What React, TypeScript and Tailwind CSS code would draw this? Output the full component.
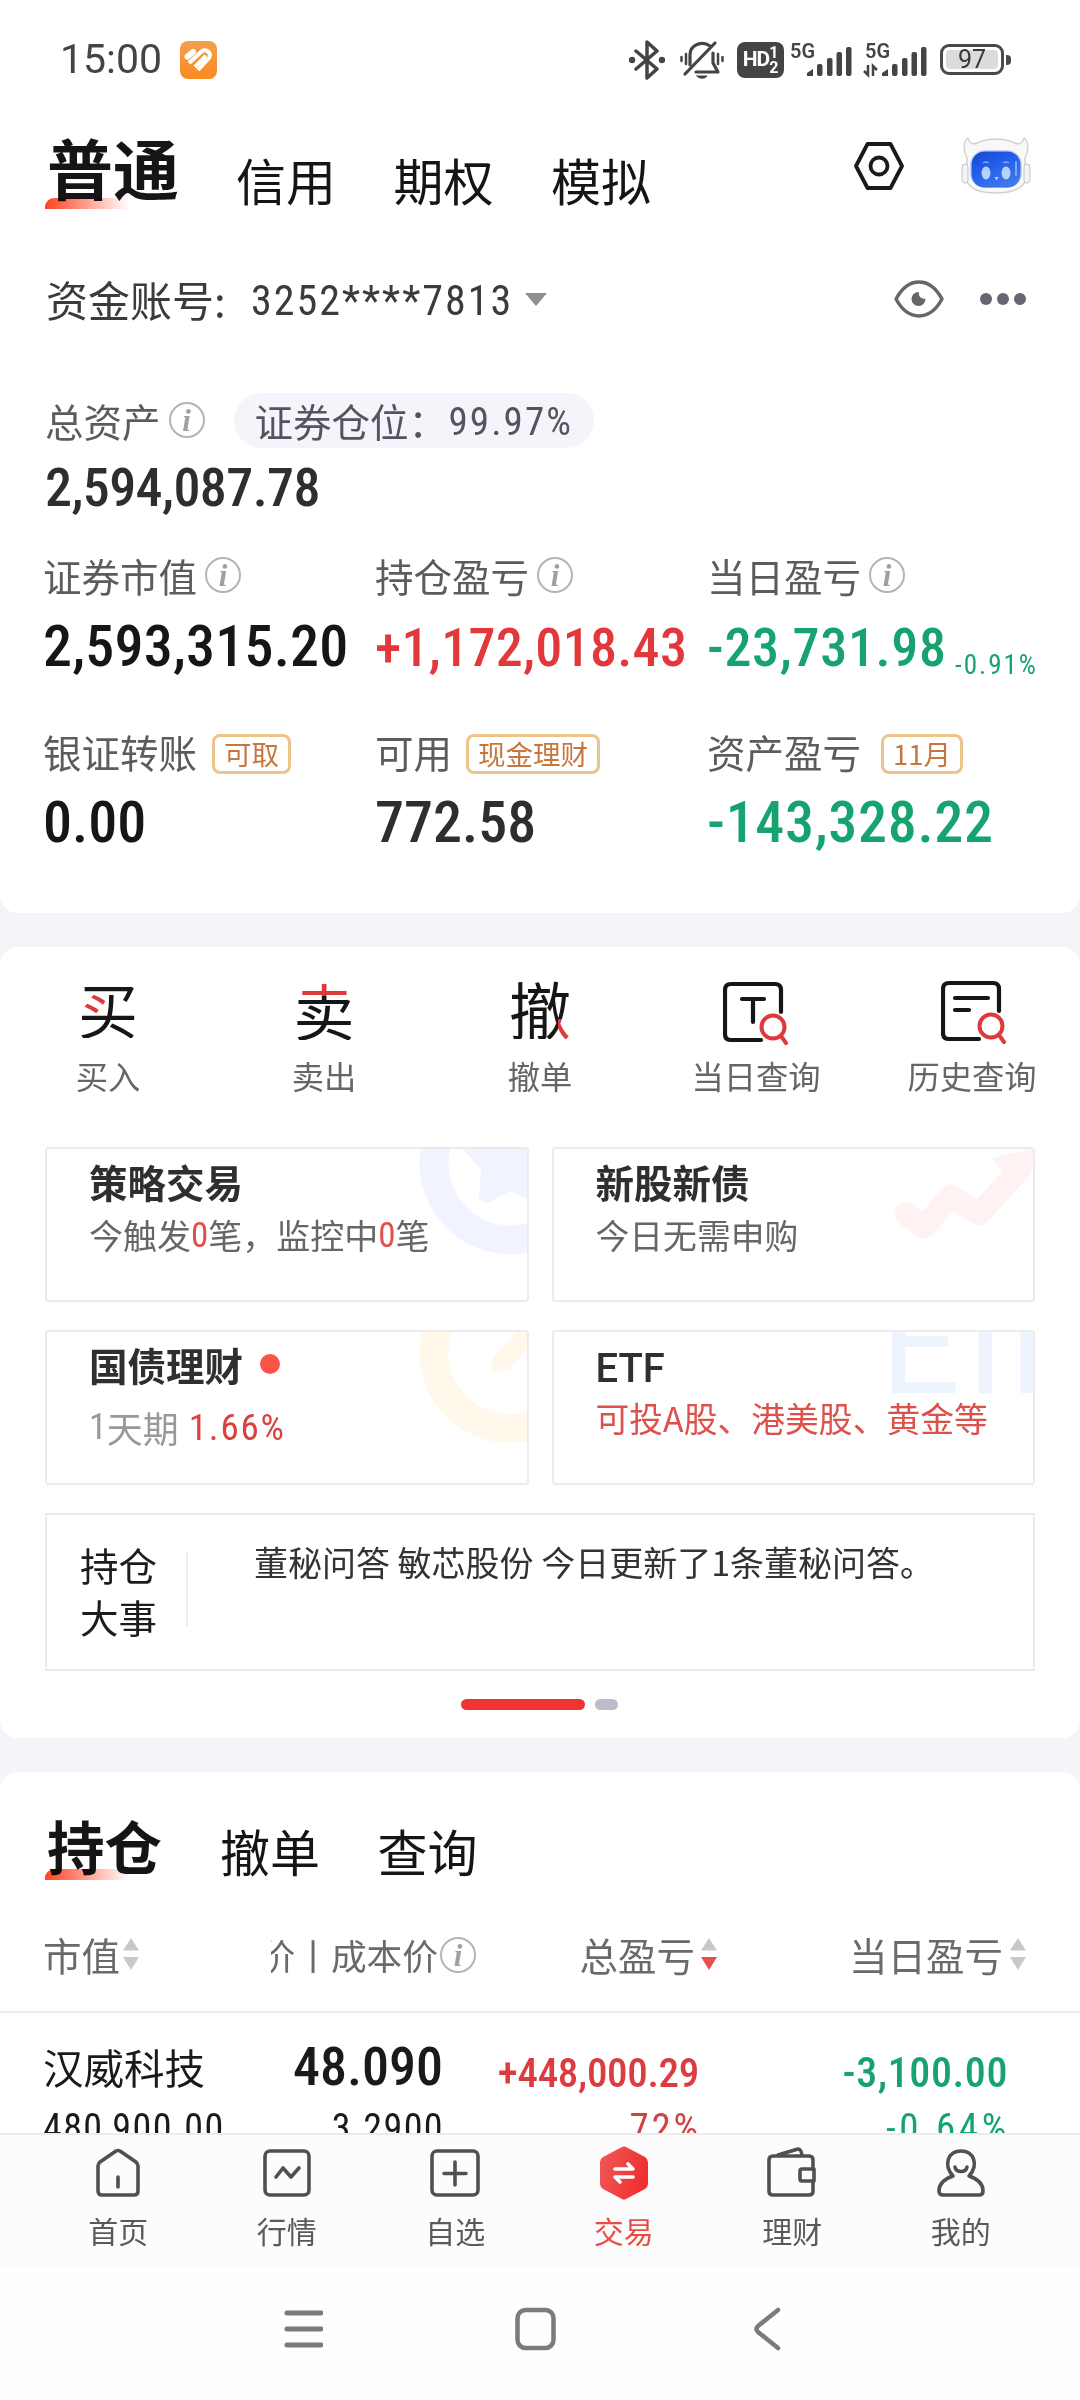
import React from 'react';

type ActionItem = { label: string; icon: React.ReactNode };

const InfoIcon = () => (
  <span className="flex h-9 w-9 shrink-0 items-center justify-center rounded-full border-2 border-[#b4b4b4] font-['Liberation_Serif',serif] text-[31px] font-bold italic leading-none text-[#a0a0a0]">
    i
  </span>
);

const Num = ({ className, children }: { className: string; children: React.ReactNode }) => (
  <span
    className={`inline-block whitespace-nowrap font-['Roboto',sans-serif] leading-none [font-stretch:85%] ${className}`}
  >
    {children}
  </span>
);

const Badge = ({ children }: { children: React.ReactNode }) => (
  <span className="mt-[5px] flex h-10 items-center rounded-lg border-3 border-[#edc48b] px-[9px] text-[27.5px] leading-none text-[#c9763c]">
    {children}
  </span>
);

const SortArrows = ({ down = '#c8c8c8' }: { down?: string }) => (
  <svg width="16" height="32" viewBox="0 0 16 32" className="shrink-0">
    <path d="M8 0 16 12.500H0Z" fill="#c8c8c8" />
    <path d="M0 19H16L8 32Z" fill={down} />
  </svg>
);

const Signal = ({ arrows = false }: { arrows?: boolean }) => (
  <svg width="64" height="36" viewBox="0 0 64 36" className="overflow-visible">
    <text x="0" y="16" fontFamily="Roboto, sans-serif" fontSize="20" fontWeight="600" fill="#444">
      5G
    </text>
    <g fill="#444">
      <path d="M17 34V31L23 27V34Z" />
      <rect x="27" y="22" width="5.500" height="12" rx="2" />
      <rect x="37" y="16" width="5.500" height="18" rx="2" />
      <rect x="46.500" y="10" width="5.500" height="24" rx="2" />
      <rect x="56" y="5" width="5.500" height="29" rx="2" />
    </g>
    {arrows && (
      <g stroke="#444" strokeWidth="2.500" fill="none">
        <path d="M3 23V33L-1 29" />
        <path d="M8 34V24L12 28" />
      </g>
    )}
  </svg>
);

const StatusBar = () => (
  <div className="flex h-[119px] shrink-0 items-center pl-[60px] pr-[69px]">
    <span className="w-[120px] font-['Roboto',sans-serif] text-[41px] leading-none text-[#444]">
      15:00
    </span>
    <svg width="37" height="38" viewBox="0 0 37 38">
      <defs>
        <linearGradient id="app" x1="0" y1="0" x2="0" y2="1">
          <stop offset="0" stopColor="#f3a04e" />
          <stop offset="1" stopColor="#f98a20" />
        </linearGradient>
      </defs>
      <rect width="37" height="38" rx="8" fill="url(#app)" />
      <g fill="none" stroke="#fff" strokeWidth="4" strokeLinejoin="round">
        <path d="M7.500 15.500 13 11" strokeWidth="6" strokeLinecap="round" />
        <path d="M9 22 21 11C25 7 32 11 29 17L18 29" />
        <path d="M15 26 26 15" />
      </g>
    </svg>
    <div className="ml-auto flex items-center">
      <svg width="36" height="40" viewBox="0 0 36 40" fill="none" stroke="#444" strokeWidth="3.500" strokeLinejoin="round" strokeLinecap="round">
        <path d="M7 11 28 29 18 38V2L28 11 7 29" />
        <circle cx="3" cy="20" r="1.500" fill="#444" />
        <circle cx="33" cy="20" r="1.500" fill="#444" />
      </svg>
      <svg className="ml-[15px]" width="44" height="40" viewBox="0 0 44 40" fill="none" stroke="#444" strokeWidth="3.200" strokeLinecap="round" strokeLinejoin="round">
        <path d="M10 25V15C10 5 22 0 30 6" />
        <path d="M33 13V23L38 32H16" />
        <path d="M5 34 35 3" />
        <path d="M6 14V24M1.500 17V21M38 14V24M42.500 17V21" strokeWidth="2.500" />
        <path d="M17 36H27C25 39 19 39 17 36Z" fill="#444" strokeWidth="1" />
      </svg>
      <span className="ml-[13px] flex h-9 w-[47px] items-center justify-center rounded-lg bg-[#444] font-['Roboto',sans-serif] font-bold leading-none text-white">
        <span className="text-[21px] tracking-[-1px]">HD</span>
        <span className="flex flex-col text-[16px] leading-[15px]">
          <span>1</span>
          <span>2</span>
        </span>
      </span>
      <span className="ml-[6px] w-[75px]">
        <Signal />
      </span>
      <span className="w-[75px]">
        <Signal arrows />
      </span>
      <span className="flex h-[31px] w-[64px] items-center justify-center rounded-[9px] border-3 border-[#4a4a4a] p-[3px]">
        <span className="flex h-full w-full items-center justify-center rounded-sm bg-[#dcdcdc] font-['Roboto',sans-serif] text-[25px] leading-none text-[#3a3a3a]">
          97
        </span>
      </span>
      <span className="ml-[2px] h-[10px] w-[5px] rounded-r-sm bg-[#4a4a4a]" />
    </div>
  </div>
);

const RobotAvatar = () => (
  <svg width="70" height="58" viewBox="0 0 70 58">
    <defs>
      <linearGradient id="face" x1="0" y1="0" x2="0.600" y2="1">
        <stop offset="0" stopColor="#1747d2" />
        <stop offset="0.500" stopColor="#2260ec" />
        <stop offset="1" stopColor="#3c78e8" />
      </linearGradient>
    </defs>
    <path
      d="M7 1C2 4 2 14 6 21L5 42C8 52 20 56 35 56S62 52 65 42L64 21C68 14 68 4 63 1C62 6 58 8 54 6C42 1 28 1 16 6C12 8 8 6 7 1Z"
      fill="#f8f8f9"
      stroke="#d3d0d3"
      strokeWidth="1.400"
    />
    <rect x="1" y="27" width="6" height="19" rx="3" fill="#f3f2f5" stroke="#c5c3c8" />
    <rect x="63" y="27" width="6" height="19" rx="3" fill="#f3f2f5" stroke="#c5c3c8" />
    <rect x="9" y="13" width="52" height="38" rx="15" fill="#c8d4f5" />
    <rect x="10.500" y="14.500" width="49" height="36" rx="13" fill="url(#face)" />
    <path d="M22 26Q25 24 28 26M42 26Q45 24 48 26" stroke="#7ea9fa" strokeWidth="1.500" fill="none" />
    <ellipse cx="25" cy="36" rx="4.500" ry="6.500" fill="#b4d2fd" />
    <ellipse cx="45" cy="36" rx="4.500" ry="6.500" fill="#b4d2fd" />
    <path d="M33.500 40H37.500L35.500 43.500Z" fill="#b4d2fd" />
    <path d="M55 25V38" stroke="#7fa8fb" strokeWidth="2" strokeLinecap="round" />
  </svg>
);

const Underline = ({ className }: { className: string }) => (
  <span
    className={`absolute -left-[2px] h-[11px] w-[84px] rounded-tl-[9px] bg-gradient-to-r from-[#ff4220] to-transparent mix-blend-multiply ${className}`}
  />
);

const Header = () => (
  <div className="flex h-[111px] shrink-0 items-start pl-[47px] pr-[49px] text-[#151515]">
    <div className="relative mt-[14px] h-[66px] w-[189px] text-[66px] font-bold leading-none">
      普通
      <Underline className="top-[65px]" />
    </div>
    <div className="mt-[35px] flex gap-[57.5px] text-[50px] leading-none">
      <span>信用</span>
      <span>期权</span>
      <span>模拟</span>
    </div>
    <svg className="ml-auto mt-[23px]" width="50" height="48" viewBox="0 0 50 48" fill="none" stroke="#1a1a1a" strokeWidth="3.800" strokeLinejoin="round">
      <path d="M13.500 2H36.500L48 24 36.500 46H13.500L2 24Z" />
      <circle cx="25" cy="24" r="8.500" />
    </svg>
    <span className="ml-[57px] mt-[18px]">
      <RobotAvatar />
    </span>
  </div>
);

const AccountRow = () => (
  <div className="flex h-[138px] shrink-0 items-center pl-[46px] pr-[54px] text-[42px] leading-none text-[#3b3b3b]">
    <span className="w-[205px]">资金账号:</span>
    <Num className="mt-1 w-[274px] text-[42px] tracking-[2px]">3252****7813</Num>
    <svg width="22" height="13" viewBox="0 0 22 13">
      <path d="M0 0H22L11 13Z" fill="#8f8f8f" />
    </svg>
    <svg className="ml-auto" width="50" height="38" viewBox="0 0 50 38" fill="none" stroke="#666" strokeWidth="3.400" strokeLinejoin="round">
      <path d="M2 19C8 8 16 2 25 2S42 8 48 19C42 30 34 36 25 36S8 30 2 19Z" />
      <path d="M25 12A7 7 0 1 0 31.500 18.500C27.500 19.500 24 16 25 12Z" fill="#666" stroke="none" />
    </svg>
    <div className="ml-[36px] flex gap-[5px]">
      <span className="h-3 w-3 rounded-full bg-[#666670]" />
      <span className="h-3 w-3 rounded-full bg-[#666670]" />
      <span className="h-3 w-3 rounded-full bg-[#666670]" />
    </div>
  </div>
);

const AssetSummary = () => (
  <div className="mt-[23px] pl-[43px]">
    <div className="flex h-[58px] items-center pl-[2px] text-[38.5px] leading-none text-[#5c5c5c]">
      <span className="mr-2">总资产</span>
      <InfoIcon />
      <span className="ml-[29px] flex h-[55px] w-[360px] items-center rounded-full bg-[#f4f5fa] pl-[21px] text-[#54545e]">
        <span className="w-[194px] whitespace-nowrap">证券仓位：</span>
        <Num className="mt-1 text-[39px] tracking-[2.1px]">99.97%</Num>
      </span>
    </div>
    <div className="flex h-[56px] items-center pl-[2px] pt-[21px] text-[#2e2e2e]">
      <Num className="text-[54px] font-medium tracking-[-0.6px]">2,594,087.78</Num>
    </div>

    <div className="mt-[50px] grid grid-cols-[332px_332px_1fr] text-[38.5px] leading-none text-[#5c5c5c]">
      <div>
        <div className="flex h-10 items-center gap-2">
          证券市值 <InfoIcon />
        </div>
        <div className="mt-[26px] flex h-[50px] items-center text-[#161616]">
          <Num className="text-[58px] font-medium tracking-[0.2px]">2,593,315.20</Num>
        </div>
      </div>
      <div>
        <div className="flex h-10 items-center gap-2">
          持仓盈亏 <InfoIcon />
        </div>
        <div className="mt-[28px] flex h-[50px] items-center text-[#e2383b]">
          <Num className="text-[54px] font-medium tracking-[0.3px]">+1,172,018.43</Num>
        </div>
      </div>
      <div>
        <div className="flex h-10 items-center gap-2">
          当日盈亏 <InfoIcon />
        </div>
        <div className="mt-[28px] flex h-[50px] items-center text-[#17a36f]">
          <Num className="w-[248px] text-[54px] font-medium tracking-[0.7px]">-23,731.98</Num>
          <Num className="mt-[34px] text-[27px] tracking-[2px]">-0.91%</Num>
        </div>
      </div>
    </div>

    <div className="mt-[58px] grid grid-cols-[332px_332px_1fr] text-[38.5px] leading-none text-[#5c5c5c]">
      <div>
        <div className="flex h-10 items-center gap-[15px]">
          银证转账 <Badge>可取</Badge>
        </div>
        <div className="mt-[26px] flex h-[50px] items-center text-[#161616]">
          <Num className="text-[58px] font-medium">0.00</Num>
        </div>
      </div>
      <div>
        <div className="flex h-10 items-center gap-[14px]">
          可用 <Badge>现金理财</Badge>
        </div>
        <div className="mt-[26px] flex h-[50px] items-center text-[#2e2e2e]">
          <Num className="text-[58px] font-medium">772.58</Num>
        </div>
      </div>
      <div>
        <div className="flex h-10 items-center gap-[20px]">
          资产盈亏 <Badge>11月</Badge>
        </div>
        <div className="mt-[26px] flex h-[50px] items-center text-[#17a36f]">
          <Num className="text-[58px] font-medium tracking-[0.7px]">-143,328.22</Num>
        </div>
      </div>
    </div>
  </div>
);

const magnifier = (
  <g stroke="#e0393c" strokeWidth="4">
    <circle cx="50" cy="46" r="11.500" />
    <path d="M58 55 63 62" />
  </g>
);

const actions: ActionItem[] = [
  {
    label: '买入',
    icon: (
      <span className="mb-[8px] bg-[#161616] bg-[linear-gradient(#e0393c,#e0393c)] bg-[length:26px_20px] bg-[position:2px_15px] bg-no-repeat bg-clip-text text-[60px] leading-none text-transparent">
        买
      </span>
    ),
  },
  {
    label: '卖出',
    icon: (
      <span className="mb-[6px] bg-[#161616] bg-[linear-gradient(#e0393c,#e0393c)] bg-[length:62px_17px] bg-[position:0_0] bg-no-repeat bg-clip-text text-[61px] leading-none text-transparent">
        卖
      </span>
    ),
  },
  {
    label: '撤单',
    icon: (
      <span className="mb-[8px] bg-[#161616] bg-[linear-gradient(#e0393c,#e0393c)] bg-[length:14px_22px] bg-[position:49px_42px] bg-no-repeat bg-clip-text text-[62px] leading-none text-transparent">
        撤
      </span>
    ),
  },
  {
    label: '当日查询',
    icon: (
      <svg className="-ml-[1px] mt-[2px]" width="66" height="64" viewBox="0 0 66 64" fill="none" stroke="#161616" strokeWidth="4.200" strokeLinecap="round">
        <path d="M58 31V9Q58 3 52 3H8Q2 3 2 9V53Q2 59 8 59H38" />
        <path d="M19 18H41M30 18V41" />
        {magnifier}
      </svg>
    ),
  },
  {
    label: '历史查询',
    icon: (
      <svg className="ml-[3px]" width="66" height="64" viewBox="0 0 66 64" fill="none" stroke="#161616" strokeWidth="4.200" strokeLinecap="round">
        <path d="M58 31V9Q58 3 52 3H8Q2 3 2 9V53Q2 59 8 59H38" />
        <path d="M14 18H47M14 30H28" />
        {magnifier}
      </svg>
    ),
  },
];

const QuickActions = () => (
  <div className="grid h-[200px] grid-cols-5 pt-[33px]">
    {actions.map((item) => (
      <div key={item.label} className="flex flex-col items-center">
        <div className="flex h-16 items-center">{item.icon}</div>
        <span className="mt-[15px] text-[32.3px] leading-none text-[#666]">{item.label}</span>
      </div>
    ))}
  </div>
);

const cardClass =
  'relative h-[155px] overflow-hidden rounded-[4px] border-2 border-[#ebebee] pl-[42px] text-[34px] leading-none text-[#666]';
const cardTitle = 'text-[38.5px] font-bold leading-none text-[#2f2f2f]';

const ServiceCards = () => (
  <div className="grid grid-cols-2 gap-x-[23px] gap-y-[28px] pl-[45px] pr-[45px]">
    <div className={cardClass}>
      <svg className="absolute -left-[2px] -top-[2px]" width="484" height="156" fill="none">
        <circle cx="466" cy="16" r="77" stroke="#f1f3fe" strokeWidth="29" />
        <path d="M416 0 436 22 434 52 442 56 465 44 484 52V0Z" fill="#f1f3fe" />
      </svg>
      <div className={`relative pt-[13px] ${cardTitle}`}>策略交易</div>
      <div className="relative mt-[17px] flex items-center">
        今触发<Num className="text-[35px] text-[#e0504c]">0</Num>笔，监控中
        <Num className="text-[35px] text-[#e0504c]">0</Num>笔
      </div>
    </div>

    <div className={cardClass}>
      <svg className="absolute -left-[2px] -top-[2px]" width="484" height="156" fill="none">
        <path d="M354 67 372 80 399 49 427 67 468 22" stroke="#fef2f2" strokeWidth="23" strokeLinecap="round" strokeLinejoin="round" />
        <path d="M440 11 484 1 484 12 464 42Z" fill="#fef2f2" />
      </svg>
      <div className={`relative pt-[13px] ${cardTitle}`}>新股新债</div>
      <div className="relative mt-[17px] text-[33.8px]">今日无需申购</div>
    </div>

    <div className={cardClass}>
      <svg className="absolute -left-[2px] -top-[2px]" width="484" height="156" fill="none">
        <circle cx="464" cy="23" r="75" stroke="#fff8eb" strokeWidth="29" />
        <path d="M448 42Q444 24 458 18L472 0H484V16L464 40Z" fill="#fff8eb" />
      </svg>
      <div className={`relative flex items-center pt-[13px] ${cardTitle}`}>
        国债理财 <span className="ml-[17px] h-5 w-5 rounded-full bg-[#fc5347]" />
      </div>
      <div className="relative mt-[25px] flex items-center text-[36px] text-[#999]">
        <Num className="text-[36px]">1</Num>天期
        <Num className="ml-[10px] text-[37px] tracking-[1.8px] text-[#d8433f]">1.66%</Num>
      </div>
    </div>

    <div className={cardClass}>
      <span className="absolute left-[327px] top-[-57px] font-['Roboto',sans-serif] text-[140px] leading-none tracking-[-18px] text-[#eef4fe]">
        ETF
      </span>
      <div className="relative pt-[17px] font-['Roboto',sans-serif] text-[40px] font-medium leading-none text-[#2f2f2f] [font-stretch:88%]">
        ETF
      </div>
      <div className="relative mt-[12px] text-[33.8px] text-[#dc514c]">可投A股、港美股、黄金等</div>
    </div>

    <div className="col-span-2 flex h-[158px] border-2 border-[#ebebee] text-[#333]">
      <div className="mt-[23px] w-[139px] shrink-0 pl-[33px] text-[38.5px] leading-[52px] text-[#1c1c1c]">
        持仓
        <br />
        大事
      </div>
      <div className="mt-[37px] h-[74px] w-[2px] bg-[#ececee]" />
      <div className="ml-[66px] mt-[30px] text-[34px] leading-none">
        董秘问答 敏芯股份 今日更新了1条董秘问答。
      </div>
    </div>
  </div>
);

const Holdings = () => (
  <section className="mt-[34px] h-[361px] shrink-0 overflow-hidden rounded-t-[18px] bg-white">
    <div className="flex h-[152px] items-start pl-[47px] text-[#151515]">
      <div className="relative mt-[45px] w-[173px] text-[57.5px] font-bold leading-none">
        持仓
        <Underline className="top-[52px]" />
      </div>
      <div className="mt-[53px] flex gap-[57.5px] text-[50px] leading-none">
        <span>撤单</span>
        <span>查询</span>
      </div>
    </div>
    <div className="flex h-[89px] items-start border-b-2 border-[#ebebee] pt-[11px] text-[38.5px] leading-none text-[#6a6a6a]">
      <div className="flex w-[225px] items-center gap-[3px] pl-[43px]">
        市值
        <SortArrows />
      </div>
      <div className="ml-[46px] flex w-[206px] items-center">
        <div className="mr-[2px] flex w-[167px] shrink-0 justify-end overflow-hidden whitespace-nowrap text-[35.7px] leading-[40px]">
          价丨成本价
        </div>
        <InfoIcon />
      </div>
      <div className="flex w-[240px] items-center justify-end gap-[6px]">
        总盈亏
        <SortArrows down="#ea4d50" />
      </div>
      <div className="flex w-[309px] items-center justify-end gap-[7px]">
        当日盈亏
        <SortArrows />
      </div>
    </div>
    <div className="grid grid-cols-[230px_213px_256px_309px] pt-[27px] text-[#1a1a1a]">
      <span className="pl-[43px] pt-[7px] text-[40.5px] leading-none">汉威科技</span>
      <span className="text-right">
        <Num className="text-[54px] font-medium">48.090</Num>
      </span>
      <span className="pt-[13px] text-right text-[#dc3c3f]">
        <Num className="text-[41px] font-medium tracking-[-0.3px]">+448,000.29</Num>
      </span>
      <span className="pt-[12px] text-right text-[#17a36f]">
        <Num className="text-[42px] font-medium tracking-[0.6px]">-3,100.00</Num>
      </span>
    </div>
    <div className="grid grid-cols-[230px_214px_257px_309px] pt-[15px] text-[#1a1a1a]">
      <Num className="pl-[43px] text-[38px] tracking-[1.4px]">480,900.00</Num>
      <Num className="text-right text-[38px] tracking-[1.4px]">3.2900</Num>
      <Num className="text-right text-[39px] tracking-[2.8px] text-[#cf4345]">72%</Num>
      <Num className="text-right text-[39px] tracking-[3.6px] text-[#17a36f]">-0.64%</Num>
    </div>
  </section>
);

const tabs = [
  {
    label: '首页',
    icon: (
      <>
        <path d="M8 21Q8 19 10 17L26 6Q28 5 30 6L46 17Q48 19 48 21V46Q48 50 44 50H12Q8 50 8 46Z" />
        <path d="M28 32V42" />
      </>
    ),
  },
  {
    label: '行情',
    icon: (
      <>
        <rect x="6" y="6" width="44" height="44" rx="5" />
        <path d="M17 32 24 23 32 32 40 23" />
      </>
    ),
  },
  {
    label: '自选',
    icon: (
      <>
        <rect x="5" y="6" width="46" height="44" rx="5" />
        <path d="M28 17V40M17 28.500H39" />
      </>
    ),
  },
  {
    label: '交易',
    active: true,
    icon: (
      <g stroke="none">
        <path d="M26 2Q28 1 30 2L49 12Q52 14 52 17V39Q52 42 49 44L30 54Q28 55 26 54L7 44Q4 42 4 39V17Q4 14 7 12Z" fill="url(#trade)" />
        <path d="M19 24H37L32 19M37 32H19L24 37" stroke="#fff" strokeWidth="3.600" />
      </g>
    ),
  },
  {
    label: '理财',
    icon: (
      <>
        <path d="M49 24V15Q49 11 45 11H9Q5 11 5 15V46Q5 50 9 50H45Q49 50 49 46V36" />
        <path d="M14 10 34 4Q37 4 38 10" />
        <path d="M50 24H38Q36 24 36 26V34Q36 36 38 36H50Z" />
      </>
    ),
  },
  {
    label: '我的',
    icon: (
      <>
        <path d="M20 31C10 20 15 6 28 6S46 20 36 31C45 34 50 39 50 46Q50 50 46 50H10Q6 50 6 46C6 39 11 34 20 31Z" />
        <path d="M22 22C23 28 33 28 34 22" />
      </>
    ),
  },
];

const TabBar = () => (
  <nav className="flex h-[134px] shrink-0 border-t-2 border-[#ececec] bg-[#fcfcfc] pl-[34px] pr-[35px]">
    {tabs.map((tab) => (
      <div key={tab.label} className="flex flex-1 flex-col items-center pt-[10px]">
        <svg width="56" height="56" viewBox="0 0 56 56" fill="none" stroke="#505050" strokeWidth="3.600" strokeLinecap="round" strokeLinejoin="round">
          <defs>
            <linearGradient id="trade" x1="0" y1="0" x2="1" y2="0.300">
              <stop offset="0" stopColor="#ef5a5c" />
              <stop offset="1" stopColor="#f0302f" />
            </linearGradient>
          </defs>
          {tab.icon}
        </svg>
        <span className={`mt-[14px] text-[30px] leading-none ${tab.active ? 'text-[#ea4b45]' : 'text-[#5a5a5a]'}`}>
          {tab.label}
        </span>
      </div>
    ))}
  </nav>
);

const SystemNav = () => (
  <div className="flex flex-1 items-start bg-[#fefefe] pt-[40px]">
    <svg className="ml-[284px]" width="39" height="44" viewBox="0 0 39 44" stroke="#7b7b7b" strokeWidth="5" strokeLinecap="round">
      <path d="M3 6H37M3 22H37M3 38H37" />
    </svg>
    <svg className="ml-[192px]" width="41" height="44" viewBox="0 0 41 44" fill="none" stroke="#7b7b7b" strokeWidth="4.500">
      <rect x="2.500" y="3" width="36" height="38" rx="8" />
    </svg>
    <svg className="ml-[198px]" width="27" height="44" viewBox="0 0 27 44" fill="none" stroke="#7b7b7b" strokeWidth="4.500" strokeLinecap="round" strokeLinejoin="round">
      <path d="M24 3 4 19Q1 22 4 25L24 41" />
    </svg>
  </div>
);

const App = () => {
  return (
    <div className="flex h-[2400px] w-[1080px] flex-col overflow-hidden bg-[#f3f5f9] font-['Noto_Sans_CJK_SC',sans-serif]">
      <section className="flex h-[913px] shrink-0 flex-col rounded-b-[18px] bg-white">
        <StatusBar />
        <Header />
        <AccountRow />
        <AssetSummary />
      </section>

      <section className="mt-[34px] h-[791px] shrink-0 rounded-[18px] bg-white">
        <QuickActions />
        <ServiceCards />
        <div className="mt-[28px] flex justify-center gap-[10px] pr-[2px]">
          <span className="h-[11px] w-[124px] rounded-full bg-[#f03333]" />
          <span className="h-[11px] w-[23px] rounded-full bg-[#bcbccb]" />
        </div>
      </section>

      <Holdings />
      <TabBar />
      <SystemNav />
    </div>
  );
};

export default App;
